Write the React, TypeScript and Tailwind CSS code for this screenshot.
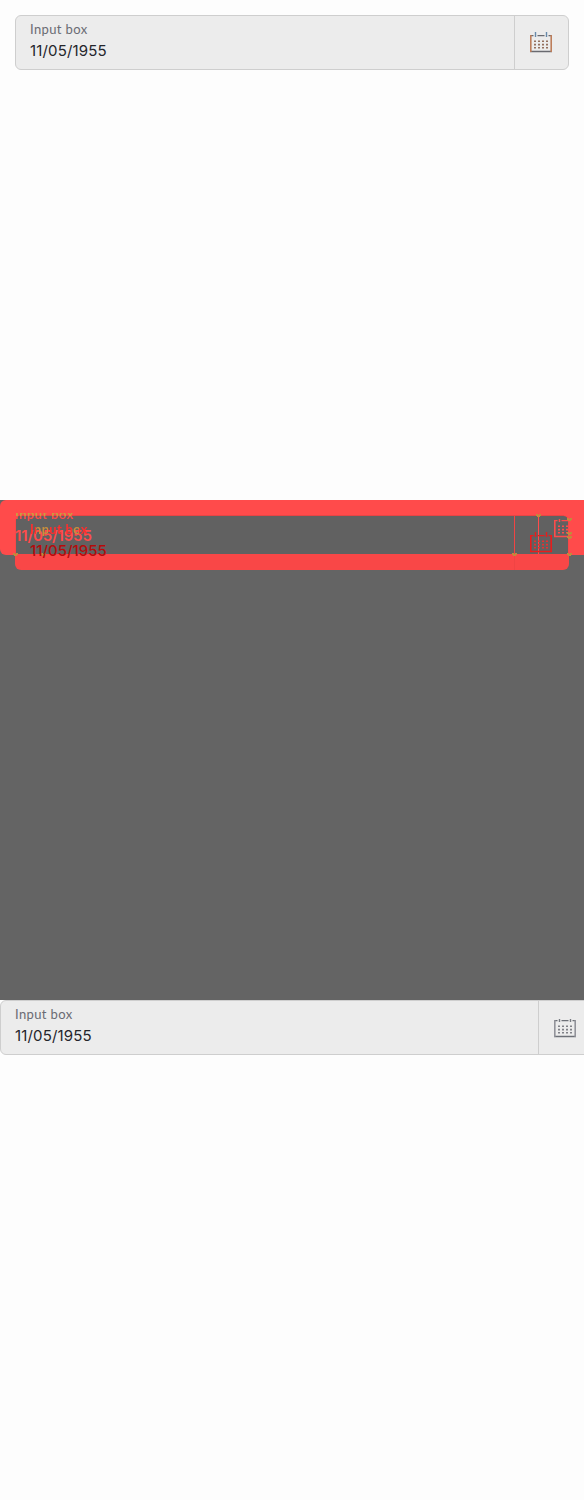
import type { ReactNode } from "react";

type CalendarProps = { stroke: string; side: string; pins: string; dots: string; short?: boolean };

function CalendarShape({ stroke, side, pins, dots, short = false }: CalendarProps) {
  const top = short ? 2 : 0;
  return (
    <g fill="none">
      <path d="M0 3.6h3.5M7.5 3.6h7M18.5 3.6h3.5M0 19.5h22" stroke={stroke} strokeWidth="1.3" />
      <path d="M0.8 3V20M21.2 3V20" stroke={side} strokeWidth="1.6" />
      <path d={`M5.5 ${top}V5M16.5 ${top}V5`} stroke={pins} strokeWidth="1.4" />
      <path d="M4 9.2h14M4 12.6h14M4 15.8h14" stroke={dots} strokeWidth="1.6" strokeDasharray="2 2" />
    </g>
  );
}

function Calendar(props: CalendarProps) {
  return (
    <svg width="22" height="21" viewBox="0 0 22 21" className="shrink-0">
      <CalendarShape {...props} />
    </svg>
  );
}

function Texts({ className, label, value }: { className: string; label: string; value: string }) {
  return (
    <div className={`flex flex-col items-start gap-[3px] whitespace-nowrap ${className}`}>
      <div className={`font-['Lato',sans-serif] text-[13px] leading-[17px] ${label}`}>Input box</div>
      <div className={`font-['Inter',sans-serif] text-[15px] leading-5 ${value}`}>11/05/1955</div>
    </div>
  );
}

function Field({ className, children }: { className: string; children: ReactNode }) {
  return (
    <div className={`flex h-[55px] shrink-0 rounded-md border border-[#cecece] bg-[#ececec] ${className}`}>
      <Texts
        className="flex-1 pt-[5px] pl-[14px]"
        label="tracking-[0.38px] text-[#6a6b73]"
        value="tracking-[0.15px] text-[#24252b]"
      />
      <div className="flex w-[54px] shrink-0 border-l border-[#cecece] pt-4 pl-[15px]">{children}</div>
    </div>
  );
}

const markers = [
  [536, 14], [512, 53], [567, 53], [567, 18], [567, 32], [567, 36], [13, 53], [41, 53],
];

function DifferenceShapes() {
  return (
    <svg width="584" height="500" viewBox="0 0 584 500" className="col-start-1 row-start-1">
      <rect width="593" height="55" rx="6" fill="#ff4b4b" />
      <rect x="15" y="15" width="554" height="55" rx="6" fill="#f94747" />
      <path d="M16 55V20q0-4 4-4H563q5 0 5 5V54H16Z" fill="#616161" />
      <path d="M514.5 15V70" stroke="#f04444" />
      <path d="M538.5 15V54" stroke="#ff4b4b" />
      <path d="M19 15.5H564" stroke="#e64545" />
      <g transform="translate(530 32)">
        <CalendarShape stroke="#e81c1c" side="#e81c1c" pins="#e81c1c" dots="#e83030" />
      </g>
      <svg x="554" y="17" width="15" height="22">
        <CalendarShape stroke="#ff4b4b" side="#ff4b4b" pins="#ff4b4b" dots="#ff4b4b" short />
      </svg>
      <g fill="#c18a3c">
        {markers.map(([x, y]) => (
          <path key={`${x}-${y}`} d={`M${x} ${y}h2v1h1v-1h2v2h-1v1h-3v-1h-1Z`} />
        ))}
      </g>
    </svg>
  );
}

function Difference() {
  return (
    <section className="grid h-[500px] grid-cols-1 items-start bg-[#646464]">
      <DifferenceShapes />
      <Texts
        className="col-start-1 row-start-1 pt-[6px] pl-[15px]"
        label="bg-[linear-gradient(180deg,#ff4b4b_0px,#ff4b4b_7px,#c9a040_7px,#c9a040_10px,#ff4b4b_10px,#ff4b4b_17px)] bg-clip-text font-bold tracking-[0.42px] text-transparent"
        value="text-[#ff4b4b] font-semibold tracking-[-0.15px]"
      />
      <Texts
        className="col-start-1 row-start-1 pt-[21px] pl-[30px]"
        label="bg-[linear-gradient(90deg,#ff2d2d_0px,#ff2d2d_6px,#c9913c_6px,#c9913c_18px,#ff2d2d_18px,#ff2d2d_42px,#c9913c_42px,#c9913c_49px,#ff2d2d_49px,#ff2d2d_60px)] bg-clip-text font-bold tracking-[0.3px] text-transparent"
        value="text-[#b50b0b] font-medium tracking-[0px]"
      />
    </section>
  );
}

export default function App() {
  return (
    <main className="h-[1500px] w-[584px] overflow-hidden bg-[#fdfdfd]">
      <section className="h-[500px] p-[15px]">
        <Field className="w-[554px]">
          <Calendar stroke="#696a70" side="#bd7e5b" pins="#6689aa" dots="#94705f" />
        </Field>
      </section>
      <Difference />
      <section className="h-[500px] overflow-hidden">
        <Field className="w-[593px]">
          <Calendar stroke="#6d7077" side="#92939a" pins="#777b82" dots="#808187" short />
        </Field>
      </section>
    </main>
  );
}
